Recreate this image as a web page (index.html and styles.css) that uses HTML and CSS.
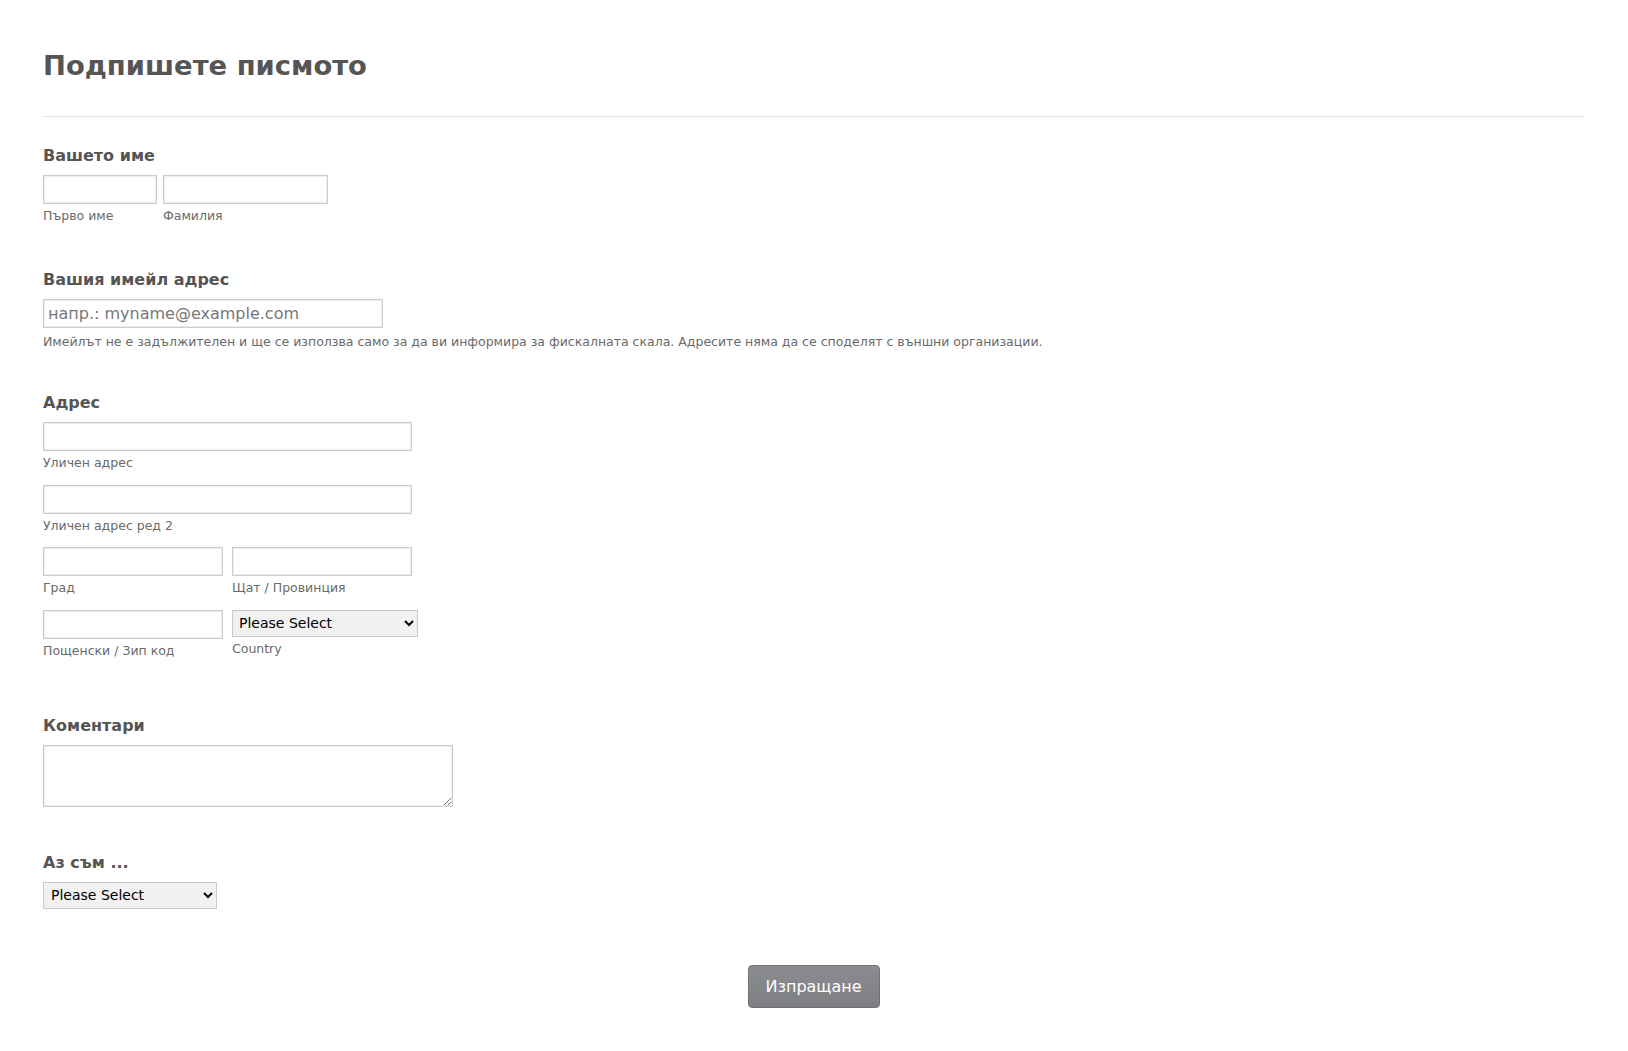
FILE: index.html
```html
<!DOCTYPE html>
<html lang="bg">
<head>
<meta charset="utf-8">
<title>Подпишете писмото</title>
<link rel="stylesheet" href="styles.css">
</head>
<body>
<form class="form">
  <header class="form-header">
    <h1 class="form-title">Подпишете писмото</h1>
  </header>

  <section class="field field-name">
    <label class="field-label">Вашето име</label>
    <div class="row row-name">
      <div class="sub">
        <input class="input input-first" type="text">
        <span class="sublabel">Първо име</span>
      </div>
      <div class="sub">
        <input class="input input-last" type="text">
        <span class="sublabel">Фамилия</span>
      </div>
    </div>
  </section>

  <section class="field field-email">
    <label class="field-label">Вашия имейл адрес</label>
    <input class="input input-email" type="email" placeholder="напр.: myname@example.com">
    <span class="help">Имейлът не е задължителен и ще се използва само за да ви информира за фискалната скала. Адресите няма да се споделят с външни организации.</span>
  </section>

  <section class="field field-address">
    <label class="field-label">Адрес</label>
    <div class="address-rows">
      <div class="sub">
        <input class="input input-wide" type="text">
        <span class="sublabel">Уличен адрес</span>
      </div>
      <div class="sub">
        <input class="input input-wide" type="text">
        <span class="sublabel">Уличен адрес ред 2</span>
      </div>
      <div class="row row-half">
        <div class="sub">
          <input class="input input-half" type="text">
          <span class="sublabel">Град</span>
        </div>
        <div class="sub">
          <input class="input input-half" type="text">
          <span class="sublabel">Щат / Провинция</span>
        </div>
      </div>
      <div class="row row-half">
        <div class="sub">
          <input class="input input-half" type="text">
          <span class="sublabel">Пощенски / Зип код</span>
        </div>
        <div class="sub">
          <select class="select select-country">
            <option>Please Select</option>
          </select>
          <span class="sublabel">Country</span>
        </div>
      </div>
    </div>
  </section>

  <section class="field field-comments">
    <label class="field-label">Коментари</label>
    <textarea class="textarea"></textarea>
  </section>

  <section class="field field-iam">
    <label class="field-label">Аз съм ...</label>
    <select class="select select-iam">
      <option>Please Select</option>
    </select>
  </section>

  <div class="actions">
    <button class="submit" type="button">Изпращане</button>
  </div>
</form>
</body>
</html>
```

FILE: styles.css
```css
html, body {
  margin: 0;
  padding: 0;
  background: #fff;
}

body {
  font-family: "DejaVu Sans", Verdana, sans-serif;
  color: #555;
}

.form {
  padding: 50px 44px 40px 43px;
  display: flex;
  flex-direction: column;
}

.form-header {
  padding-bottom: 34px;
  border-bottom: 1px solid #e3e3e3;
}

.form-title {
  margin: 0;
  font-size: 27.4px;
  line-height: 32px;
  font-weight: bold;
  color: #555;
}

.field {
  display: flex;
  flex-direction: column;
  align-items: flex-start;
}

.field-label {
  display: block;
  font-size: 16px;
  line-height: 18px;
  font-weight: bold;
  color: #555;
  margin-bottom: 10px;
}

.field-name { margin-top: 30px; }
.field-email { margin-top: 47px; }
.field-address { margin-top: 45px; }
.field-comments { margin-top: 58px; }
.field-iam { margin-top: 47px; }

.row {
  display: flex;
  align-items: flex-start;
}

.row-name { gap: 6px; }
.row-half { gap: 9px; }

.address-rows {
  display: flex;
  flex-direction: column;
  gap: 13.6px;
}

.sub {
  display: flex;
  flex-direction: column;
  align-items: flex-start;
}

.input {
  box-sizing: border-box;
  height: 29px;
  margin: 0;
  padding: 0 4px;
  border: 1px solid #cdcdcd;
  box-shadow: inset 0 0 0 1px #ededed;
  background: #fff;
  font-family: "DejaVu Sans", Verdana, sans-serif;
  font-size: 16px;
  color: #333;
  outline: none;
}

.input::placeholder {
  color: #777;
}

.input-first { width: 114px; }
.input-last { width: 165px; }
.input-email { width: 340px; }
.input-wide { width: 369px; }
.input-half { width: 180px; }

.sublabel,
.help {
  display: block;
  margin-top: 4px;
  font-size: 12.5px;
  line-height: 16px;
  color: #6a6a6a;
}

.help {
  margin-top: 6px;
  line-height: 15px;
}

.select {
  box-sizing: border-box;
  height: 27px;
  margin: 0;
  padding: 0 2px 0 2px;
  border: 1px solid #cacaca;
  border-radius: 0;
  background-color: #f1f1f1;
  font-family: "DejaVu Sans", Verdana, sans-serif;
  font-size: 14px;
  color: #000;
  outline: none;
}

.select-country { width: 186px; }
.select-iam { width: 174px; padding-left: 3px; }

.textarea {
  box-sizing: border-box;
  display: block;
  width: 410px;
  height: 62px;
  margin: 0;
  padding: 4px;
  border: 1px solid #cdcdcd;
  box-shadow: inset 0 0 0 1px #ededed;
  font-family: "DejaVu Sans", Verdana, sans-serif;
  font-size: 14px;
  outline: none;
}

.actions {
  display: flex;
  justify-content: center;
  margin-top: 56px;
}

.submit {
  box-sizing: border-box;
  width: 132px;
  height: 43px;
  border: 1px solid #727377;
  border-radius: 4px;
  background: linear-gradient(#8c8d91, #7e7f83);
  color: #fff;
  font-family: "DejaVu Sans", Verdana, sans-serif;
  font-size: 16px;
  padding: 0;
  cursor: pointer;
}
```
